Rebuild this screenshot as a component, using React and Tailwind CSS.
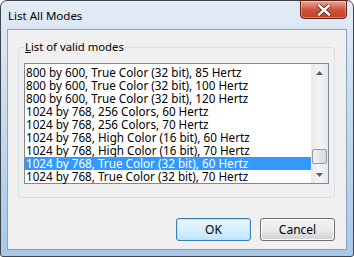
export default function App() {
  const rows = [
    "800 by 600, True Color (32 bit), 85 Hertz",
    "800 by 600, True Color (32 bit), 100 Hertz",
    "800 by 600, True Color (32 bit), 120 Hertz",
    "1024 by 768, 256 Colors, 60 Hertz",
    "1024 by 768, 256 Colors, 70 Hertz",
    "1024 by 768, High Color (16 bit), 60 Hertz",
    "1024 by 768, High Color (16 bit), 70 Hertz",
    "1024 by 768, True Color (32 bit), 60 Hertz",
    "1024 by 768, True Color (32 bit), 70 Hertz",
  ];
  const selected = 7;
  return (
    <div className="w-[354px] h-[257px] font-['Noto_Sans',sans-serif] text-[11px] text-black">
      <div className="relative w-[354px] h-[257px] border border-[#3d4650] rounded-t-[7px] rounded-b-[3px] bg-gradient-to-b from-[#e3ecf6] via-[#c4d9ee] to-[#a9c8e8] flex flex-col px-[6px] pb-[6px]">
        <div className="h-[28px] flex items-center pl-[1px] pt-[2px] text-[11.5px] text-black">
          List All Modes
        </div>
        <div className="absolute -top-px right-[6px] w-[47px] h-[19px] rounded-b-[4px] border border-[#5a2419] bg-gradient-to-b from-[#e9a99a] via-[#d0533c] to-[#c43f22] flex items-center justify-center shadow-[inset_0_0_0_1px_rgba(255,255,255,0.35)]">
          <svg width="14" height="12" viewBox="0 0 14 12">
            <path d="M2 1.5 L12 10.5 M12 1.5 L2 10.5" stroke="#5a2a20" strokeWidth="4" strokeLinecap="square" />
            <path d="M2 1.5 L12 10.5 M12 1.5 L2 10.5" stroke="#ffffff" strokeWidth="2.4" strokeLinecap="square" />
          </svg>
        </div>
        <div className="flex-1 border border-[#8aa3bd] bg-[#f0f0f0] flex flex-col">
          <div className="relative mt-[17px] ml-[10px] w-[317px] h-[151px] border border-[#d5dfe5] rounded-[3px] pt-[15px] px-[5px]">
            <div className="absolute left-[5px] -top-[9px] px-[1px] bg-[#f0f0f0] leading-[16px] text-[11.3px]">
              <span className="underline">L</span>ist of valid modes
            </div>
            <div className="w-[305px] h-[121px] border border-[#828790] bg-white flex">
              <div className="flex-1 flex flex-col pt-[2px] text-[11.7px]">
                {rows.map((r, i) => (
                  <div
                    key={i}
                    className={
                      i === selected
                        ? "h-[13px] leading-[13px] pl-[1px] bg-[#3399ff] text-white whitespace-nowrap"
                        : "h-[13px] leading-[13px] pl-[1px] whitespace-nowrap"
                    }
                  >
                    {r}
                  </div>
                ))}
              </div>
              <div className="w-[17px] bg-gradient-to-r from-[#e8e8e8] via-[#f4f4f4] to-[#e8e8e8] flex flex-col items-center">
                <div className="h-[17px] flex items-center justify-center">
                  <svg width="7" height="4" viewBox="0 0 7 4"><path d="M0 4 L3.5 0 L7 4 Z" fill="#606060" /></svg>
                </div>
                <div className="h-[68px]" />
                <div className="w-[15px] h-[15px] rounded-[2px] border border-[#9b9b9b] bg-gradient-to-r from-[#f2f2f2] to-[#d9d9d9]" />
                <div className="flex-1" />
                <div className="h-[17px] flex items-center justify-center">
                  <svg width="7" height="4" viewBox="0 0 7 4"><path d="M0 0 L7 0 L3.5 4 Z" fill="#606060" /></svg>
                </div>
              </div>
            </div>
          </div>
          <div className="mt-[20px] flex justify-end gap-[9px] pr-[11px]">
            <div className="w-[75px] h-[23px] rounded-[3px] border border-[#3c7fb1] bg-gradient-to-b from-[#eaf6fd] via-[#d9f0fc] to-[#bee6fd] shadow-[inset_0_0_0_1px_#b7e3f9] flex items-center justify-center text-[12px]">
              OK
            </div>
            <div className="w-[75px] h-[23px] rounded-[3px] border border-[#707070] bg-gradient-to-b from-[#f2f2f2] via-[#ebebeb] to-[#cfcfcf] shadow-[inset_0_0_0_1px_#fcfcfc] flex items-center justify-center text-[12px]">
              Cancel
            </div>
          </div>
        </div>
      </div>
    </div>
  );
}
